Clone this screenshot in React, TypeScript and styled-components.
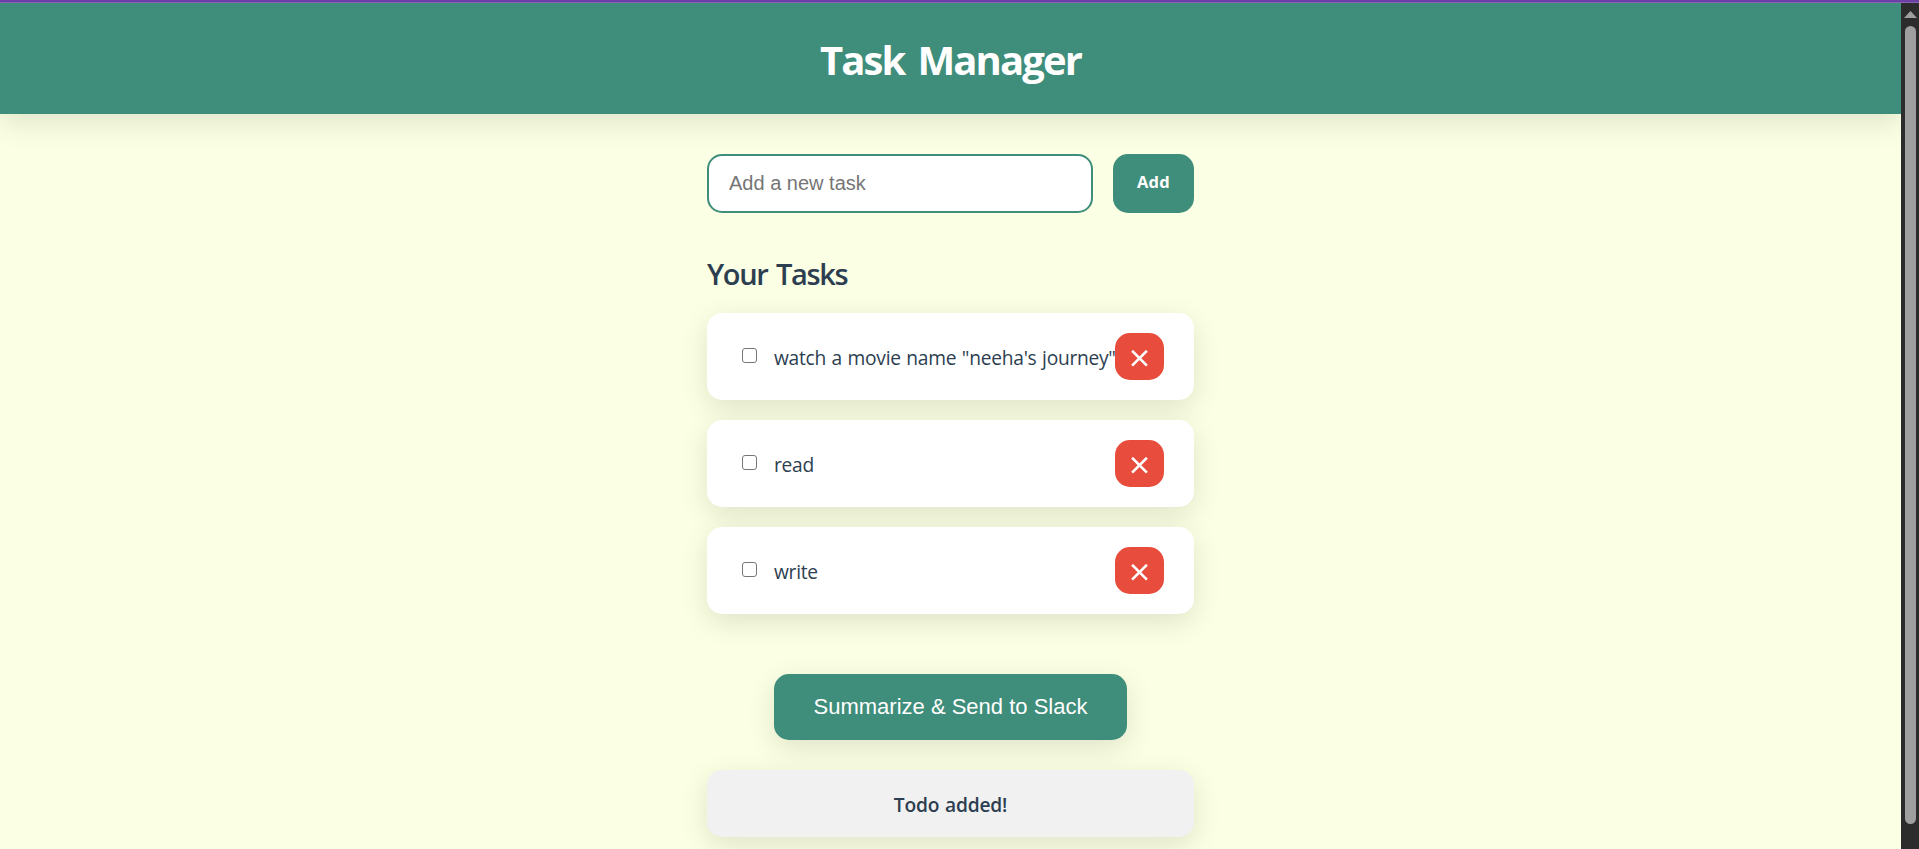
import React, { useState } from "react";
import styled, { createGlobalStyle } from "styled-components";

const colors = {
  green: "#3f8d7b",
  cream: "#fbffe3",
  ink: "#2c3e50",
  red: "#e74c3c",
};

const humanist = `"Open Sans", "Noto Sans", sans-serif`;
const grotesque = `"Liberation Sans", Arial, sans-serif`;
const shadow = "0 8px 28px rgba(0, 0, 0, 0.115)";

const GlobalStyle = createGlobalStyle`
  *, *::before, *::after { box-sizing: border-box; }
  body {
    margin: 0;
    overflow: hidden;
    background: ${colors.cream};
    color: ${colors.ink};
    font-family: ${humanist};
  }
`;

const Frame = styled.div`
  display: flex;
  flex-direction: column;
  height: 849px;
  overflow: hidden;
`;

const TopEdge = styled.div`
  flex: none;
  height: 3px;
  background: #6b3fa3;
  border-bottom: 1px solid #8a63b4;
`;

const Viewport = styled.div`
  flex: 1;
  display: flex;
  min-height: 0;
`;

const Page = styled.div`
  flex: 1;
  overflow: hidden;
  background: ${colors.cream};
`;

const Scrollbar = styled.div`
  width: 18px;
  background: #2c2c2c;
  padding: 8px 3px 0 4px;
  display: flex;
  flex-direction: column;
  align-items: center;
`;

const ScrollArrow = styled.svg`
  display: block;
  flex: none;
  width: 13px;
  height: 7px;
  margin-bottom: 8px;
`;

const ScrollThumb = styled.div`
  width: 11px;
  height: 798px;
  border-radius: 6px;
  background: #9f9f9f;
`;

const Header = styled.header`
  height: 111px;
  display: flex;
  align-items: center;
  justify-content: center;
  background: ${colors.green};
  box-shadow: ${shadow};
`;

const Title = styled.h1`
  margin: 0;
  padding-top: 3px;
  color: #fff;
  font-size: 40px;
  line-height: 56px;
  font-weight: 700;
  letter-spacing: -1.9px;
  word-spacing: 4.5px;
`;

const Main = styled.main`
  width: 487px;
  margin: 0 auto;
  padding-top: 40px;
  display: flex;
  flex-direction: column;
`;

const TaskForm = styled.form`
  display: flex;
  gap: 20px;
  height: 59px;
`;

const TaskInput = styled.input`
  flex: 1;
  min-width: 0;
  padding: 0 20px;
  border: 2px solid ${colors.green};
  border-radius: 15px;
  background: #fff;
  color: ${colors.ink};
  font: 20px ${grotesque};
  outline: none;
  &::placeholder { color: #757575; opacity: 1; }
`;

const AddButton = styled.button`
  width: 81px;
  padding: 0 0 4px;
  border: 0;
  border-radius: 15px;
  background: ${colors.green};
  color: #fff;
  font: 700 16.5px ${humanist};
  letter-spacing: 0.3px;
`;

const SectionTitle = styled.h2`
  margin: 40px 0 18px;
  font-size: 29px;
  line-height: 42px;
  font-weight: 600;
  letter-spacing: -1.35px;
  word-spacing: 2.5px;
`;

const TaskList = styled.ul`
  list-style: none;
  margin: 0;
  padding: 0;
  display: flex;
  flex-direction: column;
  gap: 20px;
`;

const TaskCard = styled.li`
  height: 87px;
  padding: 20px 30px;
  display: flex;
  align-items: center;
  border-radius: 15px;
  background: #fff;
  box-shadow: ${shadow};
`;

const Checkbox = styled.input`
  appearance: none;
  flex: none;
  width: 15px;
  height: 15px;
  margin: 0 17px 3px 5px;
  border: 1px solid #767676;
  border-radius: 3px;
  background: #fff;
  &:checked { background: ${colors.green}; }
`;

const TaskText = styled.span`
  flex: 1;
  min-width: 0;
  white-space: nowrap;
  font-size: 19.2px;
  line-height: 28px;
  padding-top: 3px;
  letter-spacing: -0.27px;
  word-spacing: 0.9px;
`;

const DeleteButton = styled.button`
  flex: none;
  width: 49px;
  height: 47px;
  padding: 3px 0 0;
  display: flex;
  align-items: center;
  justify-content: center;
  border: 0;
  border-radius: 15px;
  background: ${colors.red};
  color: #fff;
`;

const SummarizeButton = styled.button`
  align-self: center;
  width: 353px;
  height: 66px;
  margin-top: 60px;
  padding: 0;
  border: 0;
  border-radius: 15px;
  background: ${colors.green};
  color: #fff;
  font: 22px ${grotesque};
  box-shadow: ${shadow};
`;

const Notice = styled.div`
  height: 67px;
  margin-top: 30px;
  padding-top: 1px;
  display: flex;
  align-items: center;
  justify-content: center;
  border-radius: 15px;
  background: #f1f1f1;
  box-shadow: ${shadow};
  font-size: 19.2px;
  font-weight: 600;
  letter-spacing: -0.2px;
  word-spacing: 1px;
`;

const tasks = [`watch a movie name "neeha's journey"`, "read", "write"];

function CrossIcon() {
  return (
    <svg width="17" height="17" viewBox="0 0 17 17" aria-hidden="true">
      <path d="M1.1 0.8L15.9 15.6M15.9 0.8L1.1 15.6" stroke="currentColor" strokeWidth="2.6" fill="none" />
    </svg>
  );
}

export default function App() {
  const [draft, setDraft] = useState("");
  return (
    <>
      <GlobalStyle />
      <Frame>
        <TopEdge />
        <Viewport>
          <Page>
            <Header>
              <Title>Task Manager</Title>
            </Header>
            <Main>
              <TaskForm onSubmit={(e) => e.preventDefault()}>
                <TaskInput
                  placeholder="Add a new task"
                  value={draft}
                  onChange={(e) => setDraft(e.target.value)}
                />
                <AddButton type="submit">Add</AddButton>
              </TaskForm>
              <SectionTitle>Your Tasks</SectionTitle>
              <TaskList>
                {tasks.map((task) => (
                  <TaskCard key={task}>
                    <Checkbox type="checkbox" aria-label={task} />
                    <TaskText>{task}</TaskText>
                    <DeleteButton aria-label="Delete task">
                      <CrossIcon />
                    </DeleteButton>
                  </TaskCard>
                ))}
              </TaskList>
              <SummarizeButton>Summarize &amp; Send to Slack</SummarizeButton>
              <Notice>Todo added!</Notice>
            </Main>
          </Page>
          <Scrollbar>
            <ScrollArrow viewBox="0 0 13 7">
              <path d="M6.5 0L13 7H0Z" fill="#9f9f9f" />
            </ScrollArrow>
            <ScrollThumb />
          </Scrollbar>
        </Viewport>
      </Frame>
    </>
  );
}
